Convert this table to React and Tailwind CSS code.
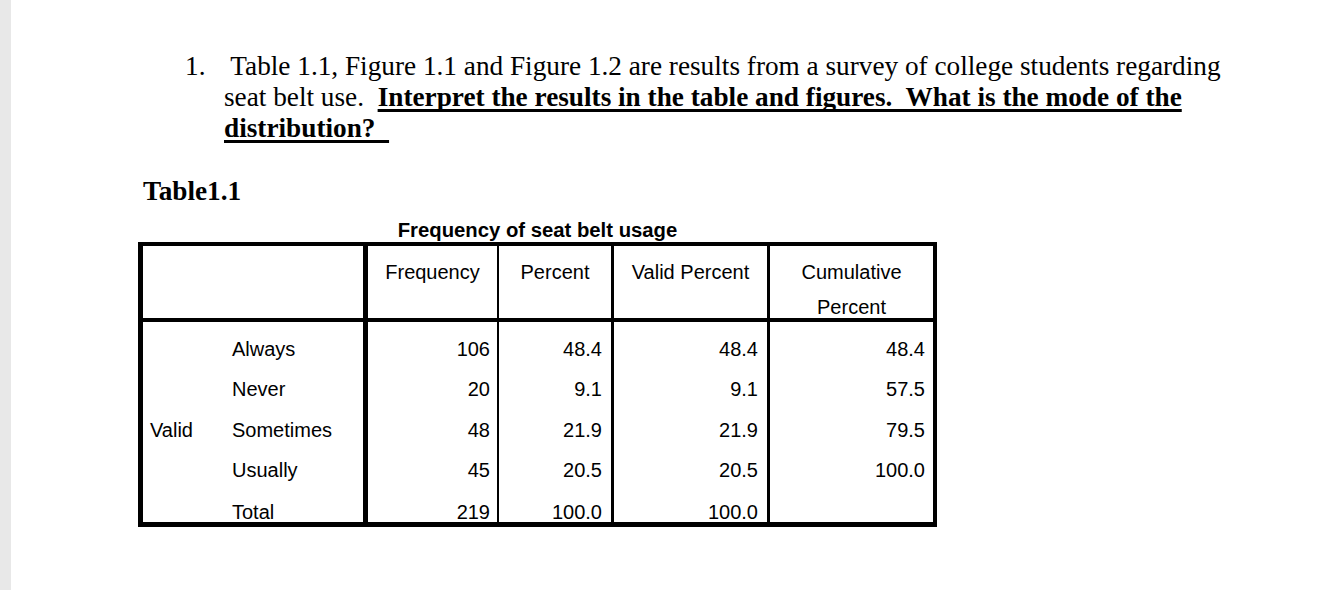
import React from "react";

const filas = [
  { etiqueta: "Always", frec: "106", pct: "48.4", valido: "48.4", acum: "48.4", pt: "pt-[17px]" },
  { etiqueta: "Never", frec: "20", pct: "9.1", valido: "9.1", acum: "57.5", pt: "pt-[17px]" },
  { etiqueta: "Sometimes", frec: "48", pct: "21.9", valido: "21.9", acum: "79.5", grupo: "Valid", pt: "pt-[18px]" },
  { etiqueta: "Usually", frec: "45", pct: "20.5", valido: "20.5", acum: "100.0", pt: "pt-[18px]" },
  { etiqueta: "Total", frec: "219", pct: "100.0", valido: "100.0", acum: "", pt: "pt-[20px]" },
];

const columnas = "grid grid-cols-[225px_131px_115px_156px_163px]";
const subrayado = "font-bold underline decoration-[3px] underline-offset-[3px] [text-decoration-skip-ink:none]";

export default function App() {
  return (
    <div className="flex min-h-[590px] bg-white text-black">
      {/* franja gris del visor */}
      <div className="w-[11px] shrink-0 bg-[#e8e8e8]" />

      <div className="pl-[127px] pt-[51px]">
        {/* Pregunta */}
        <div className="ml-[47px] flex font-['Liberation_Serif',serif] text-[27.25px] leading-[31px]">
          <span className="w-[39px] shrink-0">1.</span>
          <p className="whitespace-pre">
            {" Table 1.1, Figure 1.1 and Figure 1.2 are results from a survey of college students regarding"}
            <br />
            {"seat belt use.  "}
            <span className={subrayado}>
              {"Interpret the results in the table and figures.  What is the mode of the"}
            </span>
            <br />
            <span className={subrayado}>{"distribution?  "}</span>
          </p>
        </div>

        <h2 className="ml-[5px] mt-[32px] font-['Liberation_Serif',serif] text-[27.25px] font-bold leading-[31px]">
          Table1.1
        </h2>

        {/* Tabla de frecuencias */}
        <div className="mt-[12px] w-[799px] font-['Liberation_Sans',Arial,sans-serif] text-[20px]">
          <div className="text-center text-[20.3px] font-bold leading-[22px]">Frequency of seat belt usage</div>

          <div className="mt-px border-t-4 border-r-4 border-b-[5px] border-l-[5px] border-black">
            {/* Encabezado */}
            <div className={`${columnas} h-[76px] border-b-4 border-black leading-[35px]`}>
              <div className="border-r-[5px] border-black" />
              <div className="border-r-2 border-black pt-[9px] text-center">Frequency</div>
              <div className="border-r-[3px] border-black pt-[9px] text-center">Percent</div>
              <div className="border-r-[3px] border-black pt-[9px] text-center">Valid Percent</div>
              <div className="pt-[9px] text-center">
                Cumulative
                <br />
                Percent
              </div>
            </div>

            {/* Filas */}
            {filas.map((f) => (
              <div key={f.etiqueta} className={`${columnas} h-[40px] leading-[20px]`}>
                <div className={`flex border-r-[5px] border-black ${f.pt}`}>
                  <span className="w-[89px] pl-[7px]">{f.grupo || ""}</span>
                  <span>{f.etiqueta}</span>
                </div>
                <div className={`border-r-2 border-black pr-[7px] text-right ${f.pt}`}>{f.frec}</div>
                <div className={`border-r-[3px] border-black pr-[9px] text-right ${f.pt}`}>{f.pct}</div>
                <div className={`border-r-[3px] border-black pr-[9px] text-right ${f.pt}`}>{f.valido}</div>
                <div className={`pr-[8px] text-right ${f.pt}`}>{f.acum}</div>
              </div>
            ))}
          </div>
        </div>
      </div>
    </div>
  );
}
